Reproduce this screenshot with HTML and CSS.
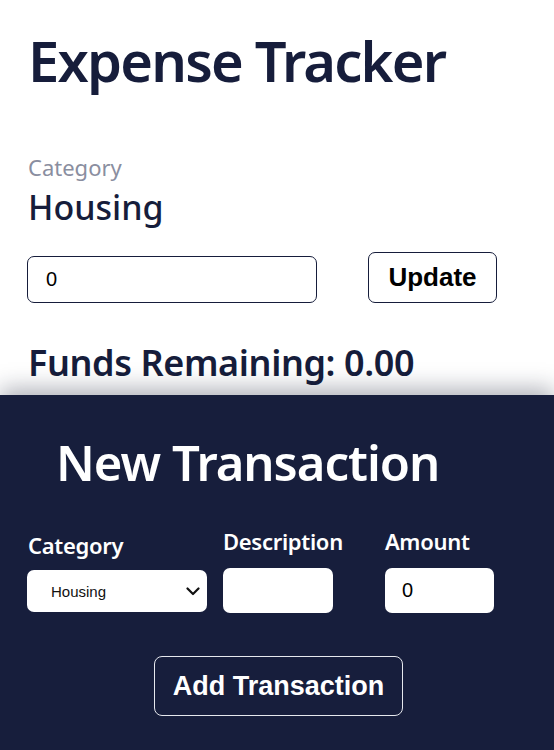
FILE: index.html
```html
<!DOCTYPE html>
<html lang="en">
<head>
<meta charset="utf-8">
<title>Expense Tracker</title>
<link rel="stylesheet" href="styles.css">
</head>
<body>
<main class="page">
  <section class="summary">
    <h1 class="title">Expense Tracker</h1>
    <div class="category-label">Category</div>
    <div class="category-name">Housing</div>
    <div class="budget-row">
      <input class="budget-input" type="text" value="0">
      <button class="update-btn" type="button">Update</button>
    </div>
    <div class="funds">Funds Remaining: 0.00</div>
  </section>
  <section class="panel">
    <h2 class="panel-title">New Transaction</h2>
    <div class="fields">
      <div class="field field-category">
        <label class="field-label">Category</label>
        <div class="select-box">
          <span class="select-text">Housing</span>
          <svg class="chev" width="14" height="9" viewBox="0 0 14 9"><path d="M1.5 1.5 L7 7 L12.5 1.5" fill="none" stroke="#111" stroke-width="2.2" stroke-linecap="round" stroke-linejoin="round"/></svg>
        </div>
      </div>
      <div class="field field-desc">
        <label class="field-label">Description</label>
        <input class="small-input" type="text" value="">
      </div>
      <div class="field field-amount">
        <label class="field-label">Amount</label>
        <input class="small-input amount-input" type="text" value="0">
      </div>
    </div>
    <div class="add-row">
      <button class="add-btn" type="button">Add Transaction</button>
    </div>
  </section>
</main>
</body>
</html>
```

FILE: styles.css
```css
html, body {
  margin: 0;
  padding: 0;
  background: #ffffff;
}
body {
  font-family: "Noto Sans", "Open Sans", sans-serif;
  color: #161d3b;
  width: 554px;
  height: 750px;
  overflow: hidden;
}
.page {
  display: flex;
  flex-direction: column;
  height: 750px;
}
.summary {
  padding: 0 28px;
  flex: 0 0 auto;
}
.title {
  margin: 0;
  padding-top: 20px;
  font-size: 56px;
  font-weight: 600;
  line-height: 80px;
  letter-spacing: -1.8px;
}
.category-label {
  margin-top: 52px;
  font-size: 22px;
  line-height: 30px;
  color: #8a8ea0;
}
.category-name {
  font-size: 34px;
  font-weight: 500;
  line-height: 40px;
  margin-top: 5px;
}
.budget-row {
  display: flex;
  align-items: flex-end;
  margin-top: 25px;
}
.budget-input {
  box-sizing: border-box;
  width: 290px;
  height: 47px;
  border: 1px solid #161d3b;
  border-radius: 7px;
  padding: 0 0 0 18px;
  font-family: "Liberation Sans", Arial, sans-serif;
  font-size: 20px;
  color: #000;
  margin-left: -1px;
  outline: none;
}
.update-btn {
  box-sizing: border-box;
  margin-left: 51px;
  width: 129px;
  height: 51px;
  border: 1px solid #161d3b;
  border-radius: 7px;
  background: #fff;
  font-family: "Liberation Sans", Arial, sans-serif;
  font-size: 26px;
  font-weight: 700;
  color: #000;
  padding: 0;
}
.funds {
  margin-top: 38px;
  font-size: 36px;
  font-weight: 600;
  line-height: 44px;
  letter-spacing: -0.4px;
}
.panel {
  margin-top: 10px;
  flex: 1 1 auto;
  background: #171e3c;
  box-shadow: 0 -6px 22px rgba(20, 25, 50, 0.35);
  color: #ffffff;
  padding: 0 28px;
}
.panel-title {
  margin: 0;
  padding-top: 35px;
  padding-left: 28px;
  font-size: 49px;
  font-weight: 600;
  line-height: 64px;
  letter-spacing: -1px;
}
.fields {
  display: flex;
  margin-top: 37px;
  align-items: flex-start;
}
.field {
  display: flex;
  flex-direction: column;
}
.field-label {
  font-size: 22px;
  font-weight: 600;
  line-height: 28px;
  letter-spacing: -0.3px;
}
.field-desc,
.field-amount {
  margin-top: -4px;
}
.select-box {
  box-sizing: border-box;
  margin-top: 11px;
  margin-left: -1px;
  width: 180px;
  height: 42px;
  background: #fff;
  border-radius: 7px;
  display: flex;
  align-items: center;
  justify-content: space-between;
  padding: 0 7px 0 24px;
  color: #111;
  font-family: "Liberation Sans", Arial, sans-serif;
  font-size: 15px;
}
.chev {
  display: block;
}
.field-desc {
  margin-left: 16px;
}
.field-amount {
  margin-left: 42px;
}
.small-input {
  box-sizing: border-box;
  margin-top: 13px;
  width: 110px;
  height: 45px;
  border: none;
  border-radius: 7px;
  background: #fff;
  padding: 0 0 0 17px;
  font-family: "Liberation Sans", Arial, sans-serif;
  font-size: 20px;
  color: #000;
  outline: none;
}
.amount-input {
  width: 109px;
}
.add-row {
  display: flex;
  justify-content: flex-start;
  margin-top: 43px;
  padding-left: 126px;
}
.add-btn {
  box-sizing: border-box;
  width: 249px;
  height: 60px;
  border: 1px solid #e6e8ee;
  border-radius: 8px;
  background: transparent;
  color: #fff;
  font-family: "Liberation Sans", Arial, sans-serif;
  font-size: 27px;
  font-weight: 700;
  padding: 0;
}
```
